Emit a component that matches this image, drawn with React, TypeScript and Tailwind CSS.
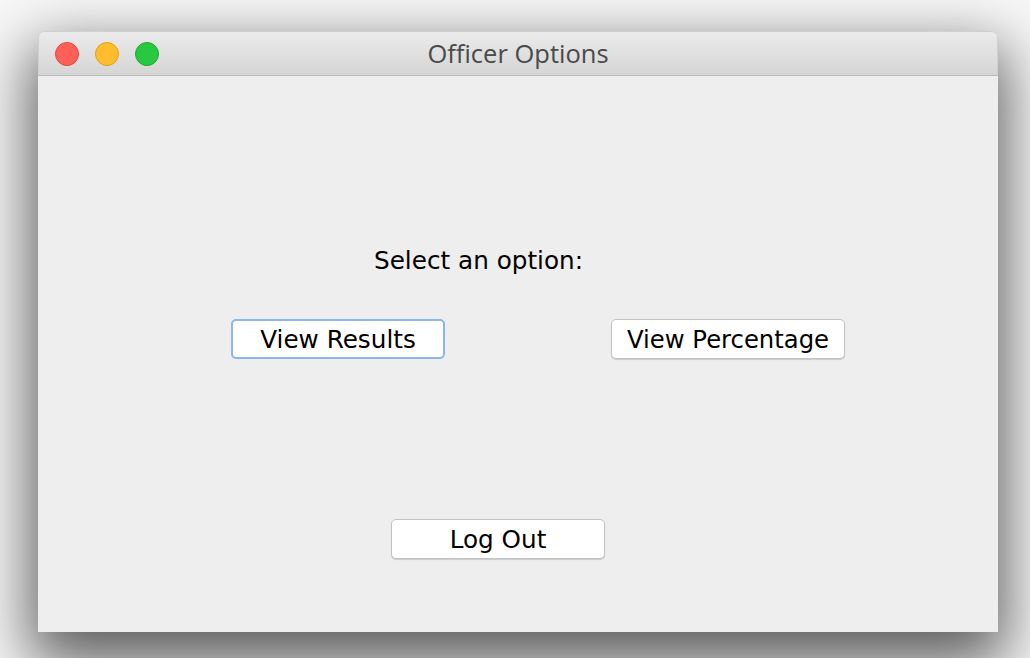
export default function App() {
  const font = { fontFamily: '"DejaVu Sans", "Liberation Sans", sans-serif' };
  return (
    <div className="w-[1030px] h-[658px] bg-[#f7f7f7] overflow-hidden pt-[31px] pl-[38px]" style={font}>
      <div className="w-[960px] h-[601px] flex flex-col bg-[#eeeeee] rounded-t-[6px] shadow-[0_24px_60px_8px_rgba(0,0,0,0.62)]">
        <div className="relative h-[45px] flex items-center justify-center rounded-t-[6px] border border-[#d0d0d0] border-b-[#b9b9b9] bg-gradient-to-b from-[#ebebeb] to-[#d5d5d5]">
          <div className="absolute left-[16px] top-[10px] flex gap-[16px]">
            <div className="w-[24px] h-[24px] rounded-full bg-[#fe5f57] border border-[#e2463f]" />
            <div className="w-[24px] h-[24px] rounded-full bg-[#febc2e] border border-[#e1a116]" />
            <div className="w-[24px] h-[24px] rounded-full bg-[#28c840] border border-[#1aab29]" />
          </div>
          <span className="text-[25.5px] leading-none text-[#4a4a4a]" style={{ fontFamily: '"Open Sans", "DejaVu Sans", sans-serif' }}>Officer Options</span>
        </div>
        <div className="flex-1 flex flex-col">
          <div className="mt-[170px] pl-[336px] h-[30px] text-[24.7px] leading-[30px] text-black">Select an option:</div>
          <div className="mt-[43px] flex pl-[193px]">
            <button className="w-[214px] h-[40px] pt-[3px] rounded-[5px] bg-white border-2 border-[#8ab5ef] text-[24.7px] text-black leading-none">View Results</button>
            <button className="ml-[166px] w-[234px] h-[40px] pt-[3px] rounded-[5px] bg-white border border-[#c2c2c2] shadow-[0_1px_1px_rgba(0,0,0,0.15)] text-[24.3px] text-black leading-none">View Percentage</button>
          </div>
          <div className="mt-[160px] pl-[353px]">
            <button className="w-[214px] h-[40px] pt-[3px] rounded-[5px] bg-white border border-[#c2c2c2] shadow-[0_1px_1px_rgba(0,0,0,0.15)] text-[24.7px] text-black leading-none">Log Out</button>
          </div>
        </div>
      </div>
    </div>
  );
}
